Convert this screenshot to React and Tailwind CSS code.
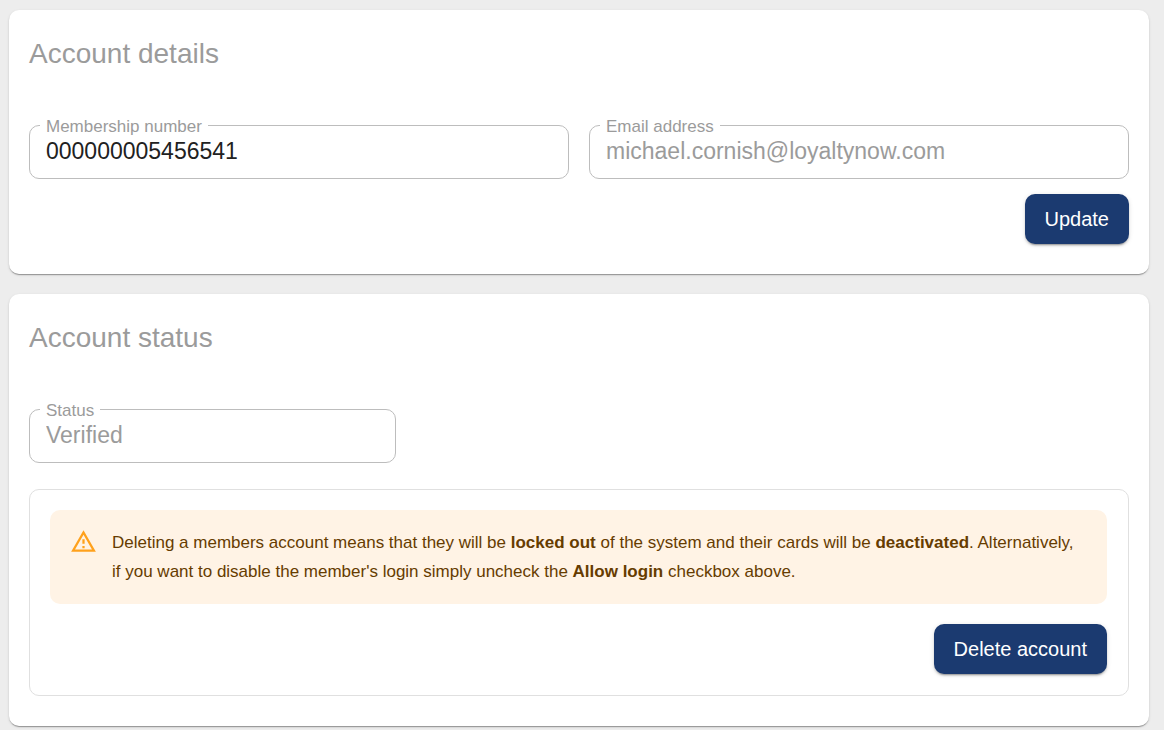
import React, { useId } from 'react'

function Card({ title, children }) {
  return (
    <section className="rounded-[10px] bg-white px-5 pt-5 pb-[30px] shadow-[0_2px_1px_-1px_rgba(0,0,0,0.2),0_1px_1px_rgba(0,0,0,0.14),0_1px_3px_rgba(0,0,0,0.12)]">
      <h2 className="mb-[50px] pt-1 pb-0.5 text-[28px] leading-[39px] text-[#9b9b9b]">{title}</h2>
      {children}
    </section>
  )
}

function TextField({ label, value, disabled = false, type = 'text' }) {
  const id = useId()

  return (
    <div className="relative">
      {/* Label sits over the top border */}
      <label
        htmlFor={id}
        className="absolute -top-2 left-[11px] bg-white px-1.5 text-[17px] leading-5 text-[#9b9b9b]"
      >
        {label}
      </label>
      <input
        id={id}
        type={type}
        defaultValue={value}
        disabled={disabled}
        className="h-[54px] w-full rounded-[10px] border border-[#bdbdbd] bg-white px-4 pb-0.5 text-[23px] text-[#212121] disabled:text-[#9b9b9b]"
      />
    </div>
  )
}

function PrimaryButton({ children }) {
  return (
    <button
      type="button"
      className="h-[50px] rounded-[10px] bg-[#1b3a70] px-5 text-xl text-white shadow-[0_3px_1px_-2px_rgba(0,0,0,0.2),0_2px_2px_rgba(0,0,0,0.14),0_1px_5px_rgba(0,0,0,0.12)]"
    >
      {children}
    </button>
  )
}

function WarningIcon() {
  return (
    <svg viewBox="0 0 24 24" className="size-[27px] shrink-0" fill="#ffa11c" aria-hidden="true">
      <path d="M12 5.99L19.53 19H4.47L12 5.99M12 2L1 21h22L12 2zm1 14h-2v2h2v-2zm0-6h-2v4h2v-4z" />
    </svg>
  )
}

export default function App() {
  return (
    <main className="flex min-h-screen flex-col gap-5 bg-[#ededed] pt-2.5 pr-[15px] pl-[9px] font-['Liberation_Sans',Arial,sans-serif]">
      <Card title="Account details">
        <div className="grid grid-cols-2 gap-5">
          <TextField label="Membership number" value="000000005456541" />
          <TextField label="Email address" type="email" value="michael.cornish@loyaltynow.com" disabled />
        </div>
        <div className="mt-[15px] flex justify-end">
          <PrimaryButton>Update</PrimaryButton>
        </div>
      </Card>

      <Card title="Account status">
        <div className="w-1/3">
          <TextField label="Status" value="Verified" disabled />
        </div>

        <div className="mt-[26px] rounded-[10px] border border-[#e0e0e0] pt-5 pr-[21px] pb-[21px] pl-5">
          <div role="alert" className="flex gap-[15px] rounded-[10px] bg-[#fff3e5] py-[18px] pr-6 pl-5 text-[#663c00]">
            <WarningIcon />
            <p className="text-[17px] leading-[29px]">
              Deleting a members account means that they will be <strong>locked out</strong> of the system and
              their cards will be <strong>deactivated</strong>. Alternatively, if you want to disable the
              member's login simply uncheck the <strong>Allow login</strong> checkbox above.
            </p>
          </div>
          <div className="mt-5 flex justify-end">
            <PrimaryButton>Delete account</PrimaryButton>
          </div>
        </div>
      </Card>
    </main>
  )
}
